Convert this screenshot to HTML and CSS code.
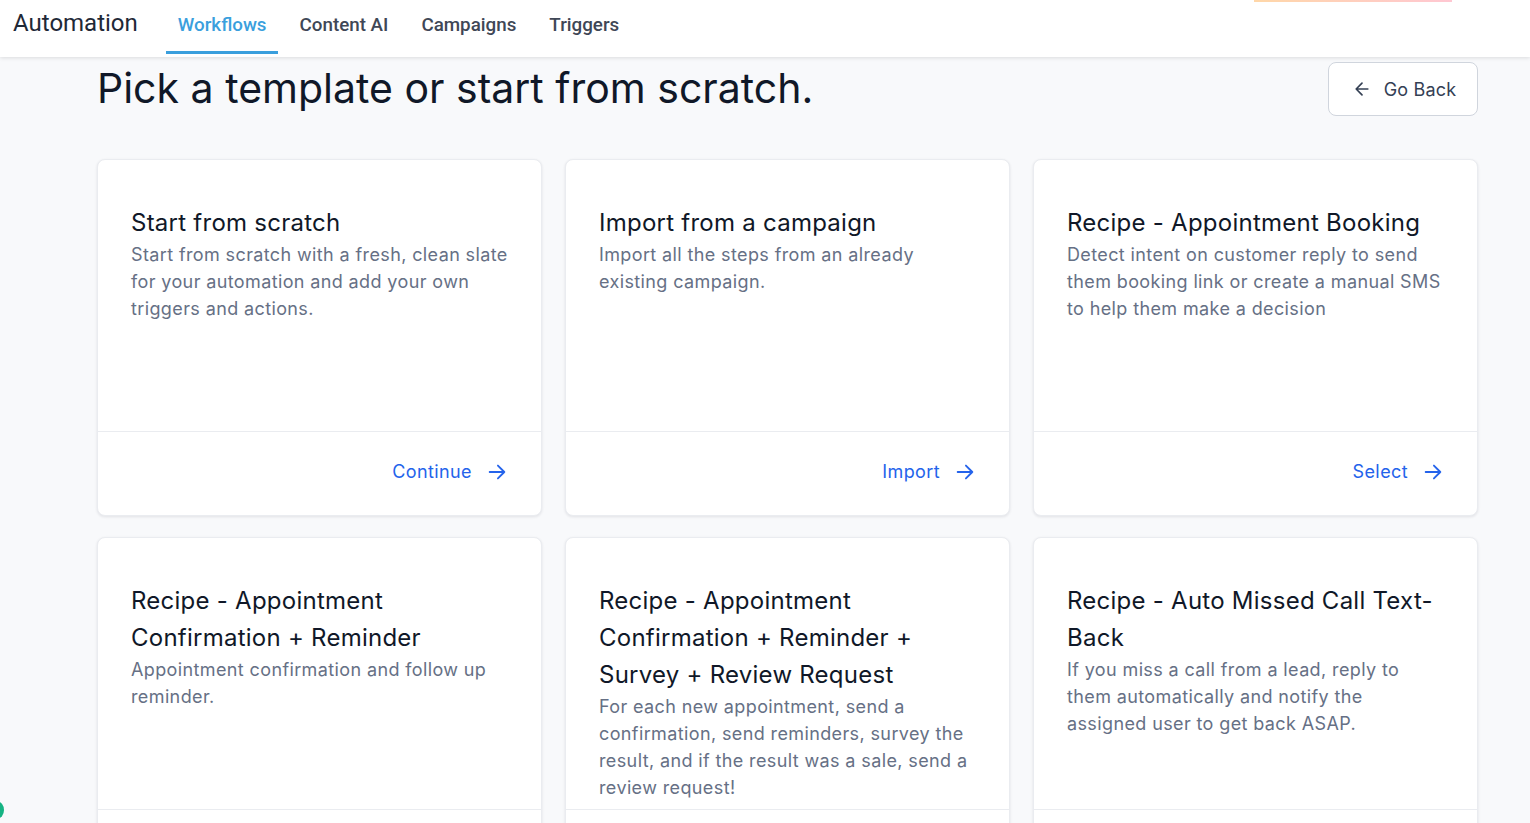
FILE: index.html
```html
<!DOCTYPE html>
<html>
<head>
  <title>Automation - Workflows</title>
  <meta name="viewport" content="width=device-width, initial-scale=1.0">
  <link rel="stylesheet" href="styles.css">
</head>
<body>
  <!-- Top navigation -->
  <div class="topbar">
    <div class="brand">Automation</div>
    <div class="tabs">
      <a class="tab active">Workflows</a>
      <a class="tab">Content AI</a>
      <a class="tab">Campaigns</a>
      <a class="tab">Triggers</a>
    </div>
    <div class="promo-line"></div>
  </div>

  <div class="page">
    <div class="page-head">
      <h1>Pick a template or start from scratch.</h1>
      <button class="back-btn">
        <svg width="20" height="20" viewBox="0 0 24 24" fill="none" stroke="#344054" stroke-width="2" stroke-linecap="round" stroke-linejoin="round"><path d="M19 12H5M12 19l-7-7 7-7"/></svg>
        Go Back
      </button>
    </div>

    <div class="cards">
      <div class="card">
        <div class="card-body">
          <h3>Start from scratch</h3>
          <p>Start from scratch with a fresh, clean slate for your automation and add your own triggers and actions.</p>
        </div>
        <div class="card-foot"><a class="card-link">Continue <svg width="22" height="22" viewBox="0 0 24 24" fill="none" stroke="currentColor" stroke-width="2" stroke-linecap="round" stroke-linejoin="round"><path d="M4 12h16M13 5l7 7-7 7"/></svg></a></div>
      </div>

      <div class="card">
        <div class="card-body">
          <h3>Import from a campaign</h3>
          <p>Import all the steps from an already existing campaign.</p>
        </div>
        <div class="card-foot"><a class="card-link">Import <svg width="22" height="22" viewBox="0 0 24 24" fill="none" stroke="currentColor" stroke-width="2" stroke-linecap="round" stroke-linejoin="round"><path d="M4 12h16M13 5l7 7-7 7"/></svg></a></div>
      </div>

      <div class="card">
        <div class="card-body">
          <h3>Recipe - Appointment Booking</h3>
          <p>Detect intent on customer reply to send them booking link or create a manual SMS to help them make a decision</p>
        </div>
        <div class="card-foot"><a class="card-link">Select <svg width="22" height="22" viewBox="0 0 24 24" fill="none" stroke="currentColor" stroke-width="2" stroke-linecap="round" stroke-linejoin="round"><path d="M4 12h16M13 5l7 7-7 7"/></svg></a></div>
      </div>

      <div class="card">
        <div class="card-body">
          <h3>Recipe - Appointment Confirmation + Reminder</h3>
          <p>Appointment confirmation and follow up reminder.</p>
        </div>
        <div class="card-foot"><a class="card-link">Select <svg width="22" height="22" viewBox="0 0 24 24" fill="none" stroke="currentColor" stroke-width="2" stroke-linecap="round" stroke-linejoin="round"><path d="M4 12h16M13 5l7 7-7 7"/></svg></a></div>
      </div>

      <div class="card">
        <div class="card-body">
          <h3>Recipe - Appointment Confirmation + Reminder + Survey + Review Request</h3>
          <p>For each new appointment, send a confirmation, send reminders, survey the result, and if the result was a sale, send a review request!</p>
        </div>
        <div class="card-foot"><a class="card-link">Select <svg width="22" height="22" viewBox="0 0 24 24" fill="none" stroke="currentColor" stroke-width="2" stroke-linecap="round" stroke-linejoin="round"><path d="M4 12h16M13 5l7 7-7 7"/></svg></a></div>
      </div>

      <div class="card">
        <div class="card-body">
          <h3>Recipe - Auto Missed Call Text-Back</h3>
          <p>If you miss a call from a lead, reply to them automatically and notify the assigned user to get back ASAP.</p>
        </div>
        <div class="card-foot"><a class="card-link">Select <svg width="22" height="22" viewBox="0 0 24 24" fill="none" stroke="currentColor" stroke-width="2" stroke-linecap="round" stroke-linejoin="round"><path d="M4 12h16M13 5l7 7-7 7"/></svg></a></div>
      </div>
    </div>
  </div>

  <div class="chat-dot"></div>
</body>
</html>
```

FILE: styles.css
```css
html, body {
  margin: 0;
  padding: 0;
  height: 100%;
  overflow: hidden;
}
body {
  font-family: Inter, "Noto Sans", sans-serif;
  background-color: #f8f9fb;
  color: #101828;
}
.topbar {
  position: relative;
  height: 57px;
  background: white;
  box-shadow: 0 1px 4px rgba(0,0,0,0.12);
  display: flex;
  align-items: stretch;
  font-family: Roboto, sans-serif;
  z-index: 2;
}
.brand {
  font-size: 24px;
  color: #1f2937;
  padding: 0 28px 0 13px;
  line-height: 46px;
}
.tabs {
  display: flex;
}
.tab {
  font-size: 18.8px;
  font-weight: 500;
  color: #3f4756;
  padding: 0 11px 0 12px;
  margin-right: 10px;
  line-height: 50px;
  cursor: pointer;
  border-bottom: 3px solid transparent;
  height: 51px;
}
.tab.active {
  color: #3a9fdd;
  border-bottom-color: #3a9fdd;
}
.promo-line {
  position: absolute;
  top: 0;
  left: 1254px;
  width: 198px;
  height: 2px;
  background: linear-gradient(90deg, #ffd7a8, #ffc7d2);
}
.page {
  padding: 5px 52px 0 97px;
}
.page-head {
  display: flex;
  justify-content: space-between;
  align-items: flex-start;
  height: 97px;
}
h1 {
  margin: 0;
  font-size: 41px;
  font-weight: 400;
  line-height: 52px;
  color: #101828;
}
.back-btn {
  display: flex;
  align-items: center;
  gap: 12px;
  height: 54px;
  width: 150px;
  justify-content: center;
  background: white;
  border: 1px solid #d0d5dd;
  border-radius: 8px;
  font-family: Inter, sans-serif;
  font-size: 18px;
  letter-spacing: 0.2px;
  color: #344054;
  cursor: pointer;
  padding: 0 0 0 2px;
}
.cards {
  display: grid;
  grid-template-columns: repeat(3, 1fr);
  column-gap: 23px;
  row-gap: 21px;
}
.card {
  background: white;
  border: 1px solid #eaecf0;
  border-radius: 8px;
  box-shadow: 0 1px 3px rgba(16,24,40,0.1);
}
.card-body {
  height: 272px;
  box-sizing: border-box;
  padding: 44px 31px 0 33px;
  overflow: hidden;
  border-bottom: 1px solid #eaecf0;
}
.card-body h3 {
  margin: 0;
  font-size: 24px;
  font-weight: 400;
  line-height: 37px;
  letter-spacing: 0.25px;
  color: #101828;
}
.card-body p {
  margin: 0;
  font-size: 18px;
  line-height: 27px;
  letter-spacing: 0.38px;
  color: #667085;
}
.card-foot {
  height: 83px;
  box-sizing: border-box;
  padding: 0 33px 4px 0;
  display: flex;
  align-items: center;
  justify-content: flex-end;
}
.card-link {
  display: flex;
  align-items: center;
  gap: 14px;
  font-size: 18px;
  letter-spacing: 0.4px;
  color: #2463eb;
  cursor: pointer;
}
.chat-dot {
  position: fixed;
  left: -10px;
  top: 801px;
  width: 14px;
  height: 18px;
  border-radius: 50%;
  background: #16b383;
}
```
